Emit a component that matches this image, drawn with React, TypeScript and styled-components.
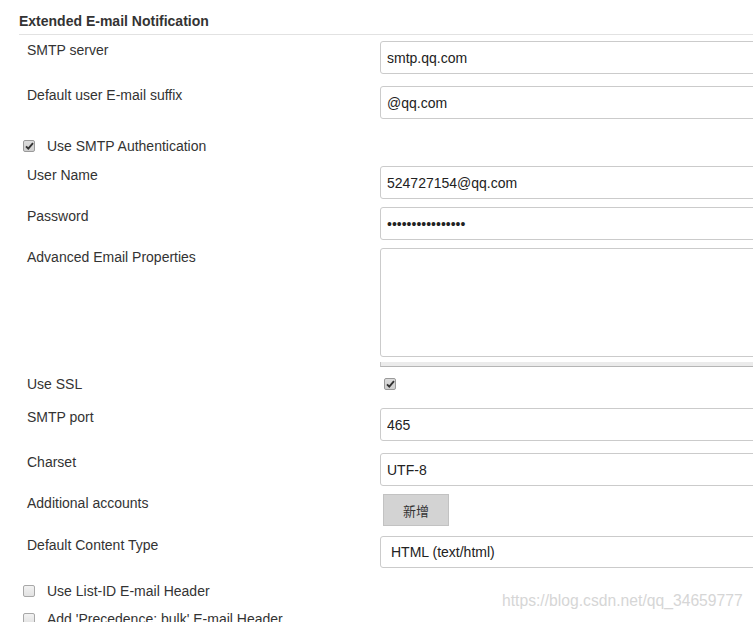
import styled, { createGlobalStyle } from "styled-components";

const GlobalStyle = createGlobalStyle`
  html, body {
    margin: 0;
    padding: 0;
    background: #fff;
  }
  body {
    font-family: "Liberation Sans", Arial, sans-serif;
    font-size: 14px;
    color: #333;
  }
`;

const Page = styled.div`
  position: relative;
  width: 753px;
  height: 622px;
  overflow: hidden;
`;

const Header = styled.div`
  margin-left: 19px;
  padding: 12px 0 4px;
  line-height: 18px;
  font-weight: 700;
  font-size: 14px;
  color: #333;
  border-bottom: 1px solid #e2e2e2;
`;

const Row = styled.div<{ $mt: number }>`
  display: grid;
  grid-template-columns: 353px 1fr;
  align-items: start;
  padding-left: 27px;
  margin-top: ${({ $mt }) => $mt}px;
`;

const Label = styled.div<{ $offset?: number }>`
  line-height: 18px;
  padding-top: ${({ $offset }) => $offset ?? 0}px;
  white-space: nowrap;
`;

const Field = styled.div`
  min-width: 0;
`;

const TextInput = styled.input`
  box-sizing: border-box;
  display: block;
  width: calc(100% + 20px);
  height: 33px;
  padding: 0 6px;
  border: 1px solid #cbcbcb;
  border-radius: 3px;
  font-family: "Liberation Sans", Arial, sans-serif;
  font-size: 14px;
  color: #222;
  background: #fff;
  outline: none;
`;

const TextArea = styled.textarea`
  box-sizing: border-box;
  display: block;
  width: calc(100% + 20px);
  height: 109px;
  padding: 6px;
  border: 1px solid #cbcbcb;
  border-radius: 3px;
  resize: none;
  outline: none;
  font-family: "Liberation Sans", Arial, sans-serif;
`;

const PreviewBar = styled.div`
  box-sizing: border-box;
  margin-left: 380px;
  margin-top: 5px;
  height: 5px;
  background: #ebebeb;
  border-left: 1px solid #c4c4c4;
  border-bottom: 1px solid #b5b5b5;
`;

const Select = styled.select`
  box-sizing: border-box;
  display: block;
  width: calc(100% + 20px);
  height: 32px;
  padding: 0 10px;
  border: 1px solid #cbcbcb;
  border-radius: 3px;
  appearance: none;
  background: #fff;
  font-family: "Liberation Sans", Arial, sans-serif;
  font-size: 14px;
  color: #222;
  outline: none;
`;

const AddButton = styled.button`
  box-sizing: border-box;
  display: block;
  margin-left: 3px;
  width: 66px;
  height: 32px;
  background: #d3d3d3;
  border: 1px solid #c2c2c2;
  border-radius: 0;
  font-family: "Noto Sans CJK SC", "Liberation Sans", sans-serif;
  font-size: 13px;
  color: #333;
  padding: 0;
`;

const CheckRow = styled.label<{ $mt: number }>`
  display: flex;
  align-items: center;
  gap: 12px;
  padding-left: 23px;
  margin-top: ${({ $mt }) => $mt}px;
  line-height: 18px;
  white-space: nowrap;
`;

const Box = styled.span<{ $checked?: boolean; $inset?: number }>`
  box-sizing: border-box;
  display: inline-flex;
  align-items: center;
  justify-content: center;
  flex: none;
  width: 12px;
  height: 12px;
  margin-left: ${({ $inset }) => $inset ?? 0}px;
  border: 1px solid ${({ $checked }) => ($checked ? "#9a9a9a" : "#a8a8a8")};
  border-radius: 2px;
  background: ${({ $checked }) =>
    $checked ? "linear-gradient(#dcdcdc, #cfcfcf)" : "linear-gradient(#f2f2f2, #e2e2e2)"};
`;

const CheckInField = styled.div`
  display: flex;
  align-items: center;
  height: 18px;
`;

const Watermark = styled.div`
  position: absolute;
  left: 502px;
  top: 592px;
  font-family: "Liberation Sans", Arial, sans-serif;
  font-size: 15.7px;
  line-height: 18px;
  color: #d6d6d6;
  white-space: nowrap;
`;

const Check = ({ checked, inset }: { checked?: boolean; inset?: number }) => (
  <Box $checked={checked} $inset={inset}>
    {checked && (
      <svg width="9" height="8" viewBox="0 0 9 8">
        <path d="M1 4.3 L3.3 6.6 L8 1.2" fill="none" stroke="#333" strokeWidth="1.9" />
      </svg>
    )}
  </Box>
);

const App = () => {
  return (
    <Page>
      <GlobalStyle />
      <Header>Extended E-mail Notification</Header>

      <Row $mt={6}>
        <Label>SMTP server</Label>
        <Field>
          <TextInput readOnly defaultValue="smtp.qq.com" />
        </Field>
      </Row>

      <Row $mt={12}>
        <Label>Default user E-mail suffix</Label>
        <Field>
          <TextInput readOnly defaultValue="@qq.com" />
        </Field>
      </Row>

      <CheckRow $mt={18}>
        <Check checked />
        Use SMTP Authentication
      </CheckRow>

      <Row $mt={11}>
        <Label>User Name</Label>
        <Field>
          <TextInput readOnly defaultValue="524727154@qq.com" />
        </Field>
      </Row>

      <Row $mt={8}>
        <Label>Password</Label>
        <Field>
          <TextInput type="password" readOnly defaultValue="xxxxxxxxxxxxxxxx" />
        </Field>
      </Row>

      <Row $mt={8}>
        <Label>Advanced Email Properties</Label>
        <Field>
          <TextArea readOnly defaultValue="" />
        </Field>
      </Row>
      <PreviewBar />

      <Row $mt={8}>
        <Label>Use SSL</Label>
        <CheckInField>
          <Check checked inset={4} />
        </CheckInField>
      </Row>

      <Row $mt={15}>
        <Label>SMTP port</Label>
        <Field>
          <TextInput readOnly defaultValue="465" />
        </Field>
      </Row>

      <Row $mt={12}>
        <Label>Charset</Label>
        <Field>
          <TextInput readOnly defaultValue="UTF-8" />
        </Field>
      </Row>

      <Row $mt={8}>
        <Label>Additional accounts</Label>
        <Field>
          <AddButton type="button">新增</AddButton>
        </Field>
      </Row>

      <Row $mt={10}>
        <Label $offset={-1}>Default Content Type</Label>
        <Field>
          <Select defaultValue="html">
            <option value="html">HTML (text/html)</option>
            <option value="text">Plain Text (text/plain)</option>
          </Select>
        </Field>
      </Row>

      <CheckRow $mt={14}>
        <Check />
        Use List-ID E-mail Header
      </CheckRow>

      <CheckRow $mt={10}>
        <Check />
        Add 'Precedence: bulk' E-mail Header
      </CheckRow>

      <Watermark>https://blog.csdn.net/qq_34659777</Watermark>
    </Page>
  );
};

export default App;
